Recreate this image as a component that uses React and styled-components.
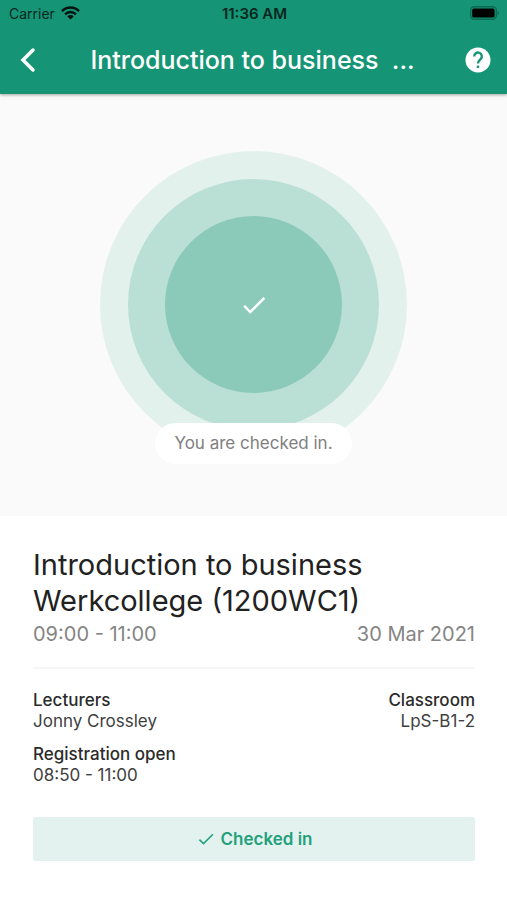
import styled, { createGlobalStyle } from "styled-components";
import { MdCheck } from "react-icons/md";

const GlobalStyle = createGlobalStyle`
  * {
    box-sizing: border-box;
  }

  body {
    margin: 0;
    background: #ffffff;
    font-family: Inter, "Liberation Sans", sans-serif;
    color: #212121;
  }
`;

const TopBar = styled.header`
  position: relative;
  background: #159575;
  box-shadow: 0 1px 3px rgba(0, 0, 0, 0.35);
`;

const StatusBar = styled.div`
  display: grid;
  grid-template-columns: 1fr auto 1fr;
  align-items: center;
  height: 26px;
  padding: 0 7px 0 9px;
  font-size: 14px;
  color: #06261e;
`;

const Carrier = styled.div`
  display: flex;
  align-items: center;
  gap: 6px;
`;

const Clock = styled.span`
  font-size: 15px;
  font-weight: 600;
`;

const BatteryIcon = styled.svg`
  justify-self: end;
`;

const NavBar = styled.div`
  display: flex;
  align-items: center;
  justify-content: space-between;
  height: 68px;
  padding: 0 14px;
`;

const IconButton = styled.button`
  display: flex;
  padding: 0;
  border: 0;
  background: none;
  color: #ffffff;
  cursor: pointer;
`;

const NavTitle = styled.h1`
  margin: 0;
  font-size: 25px;
  font-weight: 500;
  line-height: 32px;
  color: #ffffff;
  white-space: pre;
`;

const Hero = styled.section`
  display: flex;
  flex-direction: column;
  align-items: center;
  padding: 57px 0 52px;
  background: #fafafa;
`;

const Circle = styled.div`
  display: flex;
  align-items: center;
  justify-content: center;
  width: ${({ $size }) => $size}px;
  height: ${({ $size }) => $size}px;
  border-radius: 50%;
  background: ${({ $color }) => $color};
  color: #ffffff;
`;

const StatusPill = styled.p`
  z-index: 1;
  margin: -35px 0 0;
  padding: 10px 19px;
  border-radius: 21px;
  background: #ffffff;
  font-size: 17px;
  line-height: 21px;
  color: #808080;
`;

const Details = styled.main`
  padding: 31px 32px 39px 33px;
`;

const LessonTitle = styled.h2`
  margin: 0;
  font-size: 29px;
  font-weight: 400;
  line-height: 36px;
`;

const Row = styled.div`
  display: flex;
  justify-content: space-between;
`;

const TimeRow = styled(Row)`
  padding-bottom: 18px;
  border-bottom: 2px solid #f7f7f7;
  font-size: 20px;
  line-height: 30px;
  color: #858585;
`;

const InfoGrid = styled.dl`
  display: grid;
  grid-template-columns: 1fr auto;
  row-gap: 12px;
  margin: 0;
  padding: 21px 0 31px;
  font-size: 17px;
  line-height: 21px;
`;

const InfoItem = styled.div`
  text-align: ${({ $align }) => $align || "left"};
`;

const InfoLabel = styled.dt`
  font-weight: 500;
  color: #2b2b2b;
`;

const InfoValue = styled.dd`
  margin: 0;
  color: #404040;
`;

const CheckedButton = styled.button`
  display: flex;
  align-items: center;
  justify-content: center;
  gap: 5px;
  width: 100%;
  height: 44px;
  padding: 0;
  border: 0;
  border-radius: 2px;
  background: #e3f2ee;
  font-family: inherit;
  font-size: 17px;
  font-weight: 600;
  color: #23a07c;
  cursor: pointer;
`;

const info = [
  { label: "Lecturers", value: "Jonny Crossley" },
  { label: "Classroom", value: "LpS-B1-2", align: "right" },
  { label: "Registration open", value: "08:50 - 11:00" },
];

function WifiIcon() {
  return (
    <svg width="19" height="14" viewBox="0 0 19 14" aria-hidden="true">
      <g fill="none" stroke="#04130f" strokeWidth="2.4">
        <path d="M1 5.1a12 12 0 0 1 17 0" />
        <path d="M4.1 8.3a7.6 7.6 0 0 1 10.8 0" />
      </g>
      <path fill="#04130f" d="M9.5 13.6 6.3 10.4a4.5 4.5 0 0 1 6.4 0z" />
    </svg>
  );
}

function Battery() {
  return (
    <BatteryIcon width="30" height="14" viewBox="0 0 30 14" aria-hidden="true">
      <rect
        x="0.7"
        y="0.7"
        width="25.6"
        height="12.6"
        rx="3.5"
        fill="none"
        stroke="#0d6952"
        strokeWidth="1.4"
      />
      <rect x="2.2" y="2.4" width="22.4" height="9.2" rx="1.6" fill="#000000" />
      <path d="M27.6 4.8a2.5 2.5 0 0 1 0 4.4z" fill="#0d6952" />
    </BatteryIcon>
  );
}

function BackIcon() {
  return (
    <svg width="28" height="28" viewBox="0 0 28 28" aria-hidden="true">
      <path
        d="M19 4 9 14l10 10"
        fill="none"
        stroke="currentColor"
        strokeWidth="3.5"
        strokeLinecap="round"
      />
    </svg>
  );
}

function HelpIcon() {
  return (
    <svg width="30" height="30" viewBox="0 0 30 30" aria-hidden="true">
      <circle cx="15" cy="15" r="12.5" fill="currentColor" />
      <path
        d="M11.2 11.4a3.8 3.8 0 1 1 6.6 2.5c-1.3 1.3-2.8 2.1-2.8 4.6"
        fill="none"
        stroke="#159575"
        strokeWidth="2.3"
      />
      <rect x="13.8" y="20.6" width="2.4" height="2.4" fill="#159575" />
    </svg>
  );
}

function App() {
  return (
    <>
      <GlobalStyle />
      <TopBar>
        <StatusBar>
          <Carrier>
            Carrier
            <WifiIcon />
          </Carrier>
          <Clock>11:36 AM</Clock>
          <Battery />
        </StatusBar>
        <NavBar>
          <IconButton aria-label="Back">
            <BackIcon />
          </IconButton>
          <NavTitle>{"Introduction to business  ..."}</NavTitle>
          <IconButton aria-label="Help">
            <HelpIcon />
          </IconButton>
        </NavBar>
      </TopBar>

      <Hero>
        <Circle $size={307} $color="#e3f1ed">
          <Circle $size={251} $color="#badfd4">
            <Circle $size={177} $color="#8bcab8">
              <MdCheck size={30} />
            </Circle>
          </Circle>
        </Circle>
        <StatusPill>You are checked in.</StatusPill>
      </Hero>

      <Details>
        <LessonTitle>
          Introduction to business Werkcollege (1200WC1)
        </LessonTitle>
        <TimeRow>
          <span>09:00 - 11:00</span>
          <span>30 Mar 2021</span>
        </TimeRow>
        <InfoGrid>
          {info.map(({ label, value, align }) => (
            <InfoItem key={label} $align={align}>
              <InfoLabel>{label}</InfoLabel>
              <InfoValue>{value}</InfoValue>
            </InfoItem>
          ))}
        </InfoGrid>
        <CheckedButton>
          <MdCheck size={20} />
          Checked in
        </CheckedButton>
      </Details>
    </>
  );
}

export default App;
